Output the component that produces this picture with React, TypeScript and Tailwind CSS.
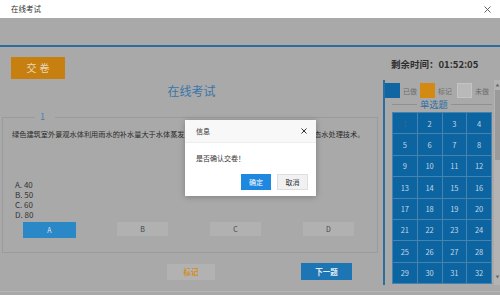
import React from "react";

export default function App() {
  const nums = Array.from({ length: 32 }, (_, i) => i + 1);
  return (
    <div className="relative w-[500px] h-[295px] overflow-hidden bg-[#a9a9a9] font-['Noto_Sans_CJK_SC',sans-serif] text-[#2e2e2e]">
      {/* window title bar */}
      <div className="flex h-[18px] items-center justify-between bg-white pl-[11px] pr-[9px]">
        <span className="text-[7.5px] leading-[10px] text-[#333]">在线考试</span>
        <svg width="7" height="7" viewBox="0 0 7 7">
          <path d="M0.5 0.5 L6.5 6.5 M6.5 0.5 L0.5 6.5" stroke="#555" strokeWidth="0.9" />
        </svg>
      </div>
      <div className="h-[27px]" />
      <div className="h-[2px] bg-[#2b6d9c]" />

      <div className="flex h-[245px] border-b border-[#b6b6b6]">
        {/* left column */}
        <div className="flex w-[383px] flex-col">
          <div className="ml-[11px] mt-[10px] flex h-[22px] w-[54px] items-center justify-center bg-[#c7800f] pl-[3px] text-[10px] leading-[12px] tracking-[3px] text-[#e6d6bc]">
            交卷
          </div>
          <div className="mt-[6px] h-[12px] text-center text-[12px] leading-[12px] text-[#3a75aa]">在线考试</div>

          <fieldset className="ml-[2px] mt-[15px] h-[141px] w-[376px] border border-[#9b9b9b]">
            <legend className="ml-[32px] pl-[5px] pr-[10px] text-[9px] leading-[10px] text-[#4a7fb0]">1</legend>
            <div className="mt-[7px] whitespace-nowrap pl-[9px] text-[7.2px] leading-[10px] text-[#2a2a2a]">
              绿色建筑室外景观水体利用雨水的补水量大于水体蒸发量的60%以上，且景观水体全部采用了生态水处理技术。
            </div>
            <div className="mt-[41px] pl-[12px] text-[8px] leading-[10px] text-[#333]">
              <div>A. 40</div>
              <div>B. 50</div>
              <div>C. 60</div>
              <div>D. 80</div>
            </div>
            <div className="mt-[2px] grid w-[372px] grid-cols-4">
              <div className="flex h-[16px] w-[53px] items-center justify-center justify-self-center bg-[#2a88c6] text-[7px] text-[#d7e6f2]">A</div>
              <div className="flex h-[14px] w-[51px] items-center justify-center justify-self-center bg-[#b1b1b1] text-[7px] text-[#444]">B</div>
              <div className="flex h-[14px] w-[51px] items-center justify-center justify-self-center bg-[#b1b1b1] text-[7px] text-[#444]">C</div>
              <div className="flex h-[14px] w-[51px] items-center justify-center justify-self-center bg-[#b1b1b1] text-[7px] text-[#444]">D</div>
            </div>
          </fieldset>

          <div className="mt-[10px] flex items-center">
            <div className="ml-[167px] flex h-[16px] w-[48px] items-center justify-center bg-[#b2b2b2] text-[7.5px] font-bold text-[#d58d1c]">标记</div>
            <div className="ml-[86px] flex h-[17px] w-[51px] items-center justify-center bg-[#1d76b3] text-[7.5px] font-bold text-[#e2ebf3]">下一题</div>
          </div>
        </div>

        {/* right column */}
        <div className="flex flex-1 flex-col">
          <div className="mt-[12px] whitespace-nowrap pl-[8px] text-[9.5px] font-bold leading-[10px] text-[#2e2e2e]">剩余时间：01:52:05</div>
          <div className="mt-[11px] flex h-[205px] border-l-2 border-[#2b6d9c]">
            <div className="flex flex-1 flex-col">
              <div className="mt-[3px] flex h-[15px] items-center text-[7px] leading-[8px] text-[#6c6c6c]">
                <div className="h-[15px] w-[15px] bg-[#0f66a3]" />
                <span className="ml-[3px] w-[14px]">已做</span>
                <div className="ml-[3px] h-[15px] w-[15px] bg-[#d38a12]" />
                <span className="ml-[3px] w-[14px]">标记</span>
                <div className="ml-[5px] h-[15px] w-[15px] border border-[#c4c4c4] bg-[#b9b9b9]" />
                <span className="ml-[3px] w-[14px]">未做</span>
              </div>
              <div className="mt-[1px] flex h-[11px] items-center">
                <div className="ml-[7px] h-px w-[25px] bg-[#909090]" />
                <span className="mx-[3px] text-[9.3px] leading-[11px] text-[#2f6ea3]">单选题</span>
                <div className="mr-[2px] h-px flex-1 bg-[#909090]" />
              </div>
              <div className="ml-[7px] mt-[2px] grid w-[100px] grid-cols-4 border-l border-t border-[#4583b1]">
                {nums.map((n) => (
                  <div
                    key={n}
                    className={
                      n === 1
                        ? "flex h-[21.375px] items-center justify-center border-b border-r border-[#4583b1] bg-[#0c64a0] text-[7.5px] text-[#3f6787]"
                        : "flex h-[21.375px] items-center justify-center border-b border-r border-[#4583b1] bg-[#0c64a0] text-[7.5px] text-[#c3d5e6]"
                    }
                  >
                    {n}
                  </div>
                ))}
              </div>
            </div>
            {/* scrollbar */}
            <div className="flex w-[6px] flex-col items-center bg-[#b3b3b3]">
              <svg width="5" height="4" viewBox="0 0 5 4" className="mt-[3px]">
                <path d="M2.5 0.5 L4.5 3.5 L0.5 3.5 Z" fill="#6a6a6a" />
              </svg>
              <div className="mt-[3px] h-[70px] w-[5px] bg-[#9a9a9a]" />
              <div className="flex-1" />
              <svg width="5" height="4" viewBox="0 0 5 4" className="mb-[6px]">
                <path d="M0.5 0.5 L4.5 0.5 L2.5 3.5 Z" fill="#6a6a6a" />
              </svg>
            </div>
          </div>
        </div>
      </div>

      {/* dialog */}
      <div className="absolute left-[185px] top-[120px] flex h-[76px] w-[131px] flex-col bg-white shadow-[0_1px_6px_rgba(0,0,0,0.25)]">
        <div className="flex h-[23px] items-center justify-between border-b border-[#eeeeee] bg-[#f8f8f8] pl-[11px] pr-[9px]">
          <span className="text-[7px] leading-[9px] text-[#333]">信息</span>
          <svg width="6" height="6" viewBox="0 0 6 6">
            <path d="M0.5 0.5 L5.5 5.5 M5.5 0.5 L0.5 5.5" stroke="#333" strokeWidth="1" />
          </svg>
        </div>
        <div className="mt-[11px] pl-[11px] text-[7px] leading-[9px] text-[#333]">是否确认交卷！</div>
        <div className="mt-[11px] flex justify-end pr-[8px]">
          <div className="flex h-[16px] w-[30px] items-center justify-center bg-[#1e87e0] text-[7px] text-white">确定</div>
          <div className="ml-[6px] flex h-[16px] w-[31px] items-center justify-center border border-[#dedede] bg-[#f1f1f1] text-[7px] text-[#333]">取消</div>
        </div>
      </div>
    </div>
  );
}
